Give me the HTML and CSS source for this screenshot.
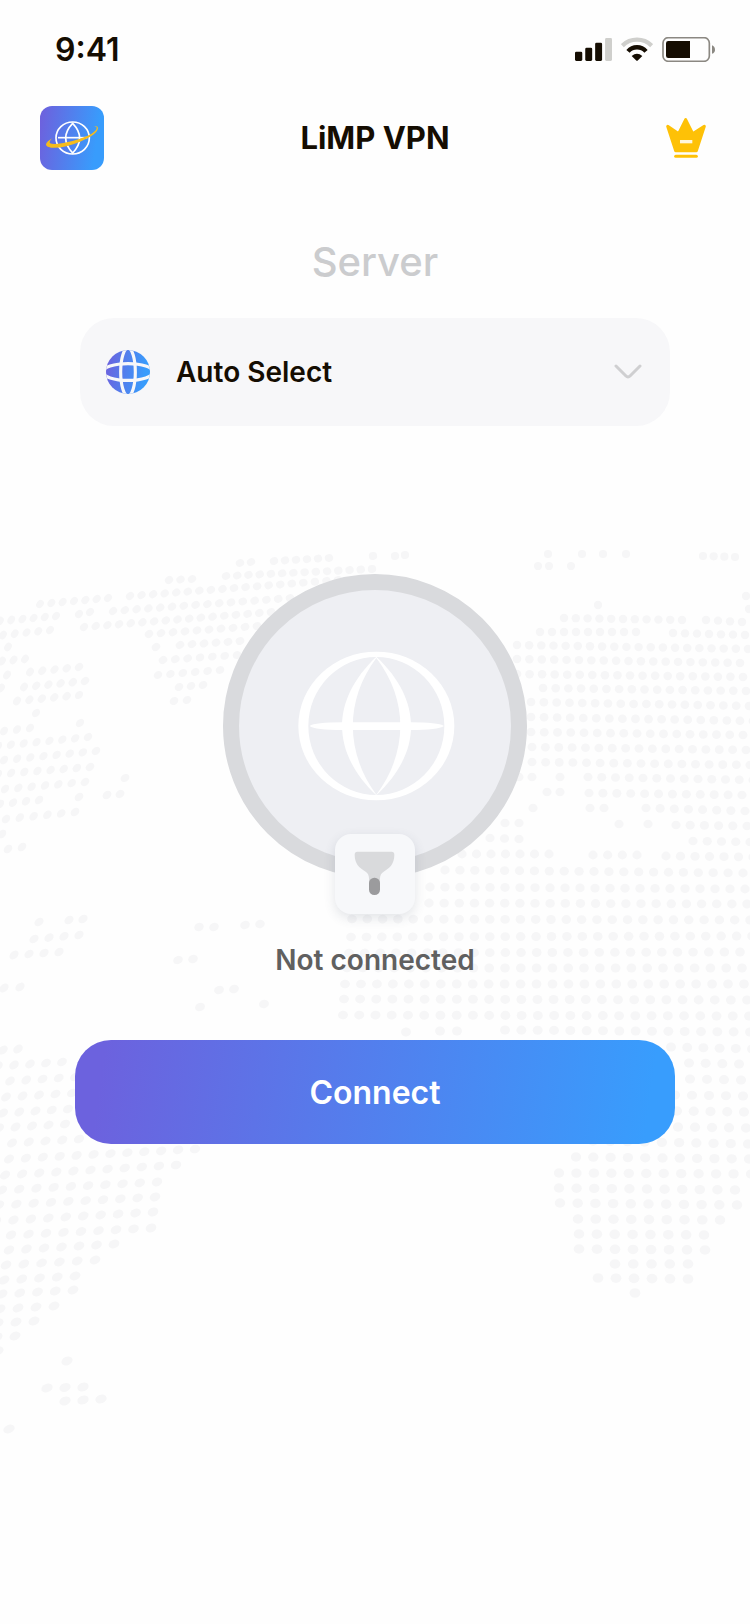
FILE: index.html
```html
<!DOCTYPE html>
<html lang="en">
<head>
	<meta charset="utf-8">
	<meta name="viewport" content="width=device-width, initial-scale=1">
	<title>LiMP VPN</title>
	<link rel="stylesheet" href="styles.css">
</head>
<body>
	<svg class="map" id="map" viewBox="0 0 750 1624" aria-hidden="true"></svg>

	<div class="status-bar">
		<span class="time">9:41</span>
		<div class="status-icons">
			<svg class="signal" viewBox="599 114 112 69" aria-hidden="true">
				<rect x="599" y="155" width="22" height="28" rx="4"/>
				<rect x="630" y="143" width="21" height="40" rx="4"/>
				<rect x="660" y="128" width="21" height="55" rx="4"/>
				<rect class="off" x="690" y="114" width="21" height="69" rx="4"/>
			</svg>
			<svg class="wifi" viewBox="741 112 96 72" aria-hidden="true">
				<path class="off" d="M745 138A63 63 0 0 1 833 138"/>
				<path class="arc" d="M762 155A36 36 0 0 1 816 155"/>
				<path d="M773 169Q789 155 805 169L792 182Q789 185 786 182Z"/>
			</svg>
			<svg class="battery" viewBox="861 111 159 75" aria-hidden="true">
				<rect class="shell" x="864" y="113" width="139" height="71" rx="16"/>
				<path d="M880 123H945V174H880Q873 174 873 167V130Q873 123 880 123Z"/>
				<path class="nub" d="M1011 136Q1020 140 1020 149T1011 161Z"/>
			</svg>
		</div>
	</div>

	<header class="header">
		<svg class="logo" viewBox="120 318 192 192" role="img" aria-label="LiMP VPN">
			<defs>
				<linearGradient id="brand" x1="0" y1="0" x2="1" y2="0.15">
					<stop offset="0.05" stop-color="#6c62de"/>
					<stop offset="0.95" stop-color="#389cfc"/>
				</linearGradient>
			</defs>
			<rect x="120" y="318" width="192" height="192" rx="36" fill="url(#brand)"/>
			<g fill="none" stroke="#fff" stroke-width="5">
				<ellipse cx="218" cy="414" rx="50" ry="48"/>
				<path d="M218 370Q176 414 218 459Q260 414 218 370Z"/>
				<path d="M174 413H262"/>
			</g>
			<path fill="#f6bc1c" d="M278 380Q292 376 294 383Q294 402 240 425Q190 446 153 443Q138 441 138 433Q140 424 158 414Q146 424 150 430Q160 435 190 429Q245 418 275 401Q292 390 290 382Q286 378 278 380Z"/>
		</svg>
		<h1 class="title">LiMP VPN</h1>
		<button class="premium" type="button" aria-label="Premium">
			<svg viewBox="861 342 144 144" aria-hidden="true">
				<path class="crown" d="M878 379L911 401L932 359L953 401L988 379L964 452H902Z"/>
				<path class="crown-line" d="M902 469H964"/>
				<path class="crown-dash" d="M915 425H952"/>
			</svg>
		</button>
	</header>

	<main class="main">
		<label class="server-label" for="server">Server</label>
		<div class="server">
			<svg class="server-icon" viewBox="0 0 42 42" aria-hidden="true">
				<clipPath id="disc"><circle cx="21" cy="21" r="21"/></clipPath>
				<circle cx="21" cy="21" r="21" fill="url(#brand)"/>
				<g class="grid-lines" clip-path="url(#disc)">
					<ellipse cx="21" cy="21" rx="7" ry="23"/>
					<ellipse cx="21" cy="21" rx="24" ry="8"/>
				</g>
			</svg>
			<select class="server-select" id="server">
				<option>Auto Select</option>
			</select>
			<svg class="chevron" viewBox="0 0 28 16" aria-hidden="true">
				<path d="M2 2L12 12Q14 14 16 12L26 2"/>
			</svg>
		</div>

		<div class="dial">
			<svg class="globe" viewBox="284 302 480 456" aria-hidden="true">
				<path fill-rule="evenodd" d="M294 530A234 223 0 0 1 762 530A234 223 0 0 1 294 530ZM324 530A204 207 0 0 0 732 530A204 207 0 0 0 324 530Z"/>
				<path fill-rule="evenodd" d="M528 322C391 452 391 608 528 738C667 608 667 452 528 322ZM528 326C434 452 434 608 528 736C624 608 624 452 528 326Z"/>
				<path d="M328 530Q343 519 428 519H630Q713 519 731 530Q713 542 630 542H428Q343 542 328 530Z"/>
			</svg>
			<div class="badge">
				<svg viewBox="408 852 240 240" aria-hidden="true">
					<path fill="#d9dadc" d="M475 905H578Q586 905 586 914C586 942 572 954 554 965Q543 972 543 985V1005H510V985Q510 972 500 965C482 954 467 942 467 914Q467 905 475 905Z"/>
					<rect fill="#9b9b9d" x="510" y="983" width="33" height="52" rx="16"/>
				</svg>
			</div>
		</div>

		<p class="state">Not connected</p>
		<button class="connect" type="button">Connect</button>
	</main>

	<script src="map.js"></script>
</body>
</html>
```
FILE: styles.css
```css
* {
	box-sizing: border-box;
}
body {
	position: relative;
	min-height: 100vh;
	margin: 0;
	overflow-x: hidden;
	background: #fefefe;
	color: #150d02;
	font-family: Inter, "Liberation Sans", sans-serif;
}
button, select {
	border: 0;
	font-family: inherit;
	cursor: pointer;
}
svg {
	display: block;
}

/* dotted world map behind the page */
.map {
	position: absolute;
	top: 0;
	left: 0;
	z-index: -1;
	width: 100%;
	fill: #f6f6f7;
}

.status-bar {
	display: flex;
	align-items: center;
	justify-content: space-between;
	height: 98px;
	padding: 0 35px 0 55px;
}
.time {
	font-size: 32px;
	font-weight: 600;
}
.status-icons {
	display: flex;
	align-items: center;
	gap: 9px;
	fill: #150d02;
}
.signal {
	width: 37px;
	height: 23px;
}
.signal .off {
	fill: #cfcfcc;
}
.wifi {
	width: 32px;
	height: 24px;
}
.wifi .off, .wifi .arc {
	fill: none;
	stroke: #cfcfcc;
	stroke-width: 13;
}
.wifi .arc {
	stroke: #150d02;
}
.battery {
	width: 53px;
	height: 25px;
}
.battery .shell {
	fill: none;
	stroke: #8b8882;
	stroke-width: 5;
}
.battery .nub {
	fill: #8b8882;
}

.header {
	display: grid;
	grid-template-columns: 1fr auto 1fr;
	align-items: center;
	padding: 8px 40px 0;
}
.logo {
	width: 64px;
	height: 64px;
}
.title {
	margin: 0;
	font-size: 31px;
	line-height: 40px;
	font-weight: 700;
}
.premium {
	justify-self: end;
	width: 48px;
	height: 48px;
	padding: 0;
	background: none;
}
.crown {
	fill: #fec107;
	stroke: #fec107;
	stroke-width: 9;
	stroke-linejoin: round;
}
.crown-line {
	stroke: #fec107;
	stroke-width: 9;
	stroke-linecap: round;
}
.crown-dash {
	stroke: #fff6dc;
	stroke-width: 10;
}

.main {
	display: flex;
	flex-direction: column;
	align-items: center;
	padding: 68px 75px 0;
}
.server-label {
	color: #cbccce;
	font-size: 40px;
	line-height: 48px;
	font-weight: 500;
}
.server {
	display: grid;
	grid-template-columns: 44px 1fr 28px;
	align-items: center;
	width: calc(100% - 10px);
	height: 108px;
	margin-top: 32px;
	padding: 0 28px 0 26px;
	border-radius: 34px;
	background: #f7f7f9;
}
.server-icon {
	grid-area: 1 / 1;
}
.grid-lines {
	fill: none;
	stroke: #f7f7f9;
	stroke-width: 3;
}
.server-select {
	grid-area: 1 / 1 / 2 / 4;
	height: 108px;
	padding: 0 0 0 70px;
	appearance: none;
	background: none;
	color: #150d02;
	font-size: 28px;
	font-weight: 600;
}
.chevron {
	grid-area: 1 / 3;
	fill: none;
	stroke: #cfcfd1;
	stroke-width: 3;
	stroke-linecap: round;
	pointer-events: none;
}

.dial {
	position: relative;
	display: flex;
	align-items: center;
	justify-content: center;
	width: 304px;
	height: 304px;
	margin-top: 148px;
	border: 16px solid #d9dadd;
	border-radius: 50%;
	background: #eeeff3;
}
.globe {
	width: 160px;
	height: 152px;
	fill: #fff;
}
.badge {
	position: absolute;
	bottom: -52px;
	left: calc(50% - 40px);
	width: 80px;
	height: 80px;
	border-radius: 16px;
	background: #f7f8fa;
	box-shadow: 0 4px 12px rgba(60, 70, 90, 0.14);
}

.state {
	margin: 64px 0 0;
	color: #606060;
	font-size: 28px;
	line-height: 36px;
	font-weight: 600;
}
.connect {
	width: 100%;
	height: 104px;
	margin-top: 62px;
	border-radius: 36px;
	background: linear-gradient(98deg, #6c62de 5%, #389dfd 95%);
	color: #fff;
	font-size: 32px;
	font-weight: 600;
}
```
FILE: map.js
```js
// each run of dots: x and y of the first dot, x and y of the last, number of dots
const runs = [
	// north-west
	[240,563,251,562,2], [274,561,329,558,6], [373,556,373,556,1], [395,556,405,555,2],
	[169,580,192,579,3], [226,576,372,569,14],
	[40,604,108,598,7], [130,596,338,580,19],
	[0,621,56,616,6], [79,614,90,612,2], [113,611,290,598,16],
	[3,635,50,630,5], [84,627,271,612,17],
	[8,647,8,647,1], [149,634,257,626,10],
	[2,661,25,659,3], [156,647,156,647,1], [180,645,240,641,6],
	[7,675,7,675,1], [30,672,79,667,5], [163,660,237,655,7],
	[1,688,1,688,1], [24,687,85,681,6], [158,675,220,670,6],
	[17,701,79,695,6], [179,687,203,685,3],
	[36,713,36,713,1], [174,701,187,700,2],
	[4,731,30,728,3], [80,723,80,723,1],
	[-2,746,88,737,8],
	[4,760,96,751,8],
	[-2,774,90,767,8],
	[5,789,85,782,7], [125,778,125,778,1],
	[0,804,39,800,4], [79,797,79,797,1], [107,795,120,794,2],
	[6,819,75,812,6],
	[2,834,2,834,1],
	[8,849,22,847,2],
	[39,922,39,922,1], [69,920,83,919,2],
	[34,939,79,935,4],
	[14,955,59,952,4],
	[4,988,20,987,2],
	[199,927,214,927,2], [245,925,260,924,2],
	[178,960,193,959,2],
	[219,990,234,989,2],
	[200,1007,200,1007,1], [264,1004,264,1004,1],

	// south-west
	[3,1050,18,1049,2],
	[-2,1066,62,1062,5],
	[10,1081,75,1077,5],
	[6,1097,72,1093,5],
	[3,1113,68,1109,5],
	[-1,1128,65,1124,5],
	[12,1143,79,1139,5],
	[9,1159,195,1149,12],
	[5,1175,176,1165,11],
	[2,1190,157,1182,10],
	[-1,1205,155,1197,10],
	[-4,1221,153,1212,10],
	[11,1235,151,1228,9],
	[9,1250,114,1244,7],
	[6,1265,95,1260,6],
	[4,1280,75,1276,5],
	[2,1294,73,1290,5],
	[0,1309,54,1306,4],
	[-2,1323,34,1321,3],
	[-3,1337,15,1336,2],
	[-2,1351,-2,1351,1],
	[67,1361,67,1361,1],
	[47,1388,83,1387,3],
	[65,1401,101,1399,3],
	[9,1429,9,1429,1],

	// north-east
	[548,554,548,554,1], [582,554,582,554,1], [603,554,603,554,1], [626,554,626,554,1], [703,556,735,557,4],
	[538,566,549,566,2], [571,566,571,566,1],
	[746,596,746,596,1], [598,605,598,605,1], [749,609,749,609,1],
	[564,618,682,620,11], [706,620,742,622,4],
	[540,632,636,632,9], [673,633,745,635,7],
	[517,645,748,649,20],
	[517,659,740,663,19],
	[517,674,743,677,19],
	[543,688,746,691,17],
	[531,702,749,706,18],
	[531,717,753,721,18],
	[531,732,743,735,17],
	[532,747,746,750,17],
	[532,762,750,765,17],
	[519,777,532,777,2], [560,777,560,777,1], [588,777,753,780,13],
	[547,792,560,792,2], [589,793,742,795,12],
	[533,808,533,808,1], [590,808,604,808,2], [646,808,745,811,8],
	[505,823,519,823,2], [619,824,619,824,1], [648,824,648,824,1], [676,825,747,826,6],
	[490,838,519,839,3], [693,841,750,842,5],
	[462,854,549,854,7], [593,855,637,855,4], [666,856,753,857,7],
	[445,870,743,873,21],
	[430,887,745,889,22],
	[429,903,747,904,22],
	[352,919,750,920,27],
	[351,937,752,936,27],
	[349,953,740,952,26],
	[347,968,742,968,26],
	[345,984,744,984,26],
	[344,999,747,1000,26],
	[343,1015,749,1016,26],
	[406,1032,406,1032,1], [440,1031,457,1031,2], [505,1030,750,1032,16],

	// south-east
	[671,1047,752,1049,6],
	[689,1063,739,1064,4],
	[690,1079,741,1080,4],
	[675,1095,743,1096,5],
	[677,1111,744,1112,5],
	[678,1127,746,1128,5],
	[593,1141,748,1144,10],
	[576,1157,749,1159,11],
	[559,1173,751,1174,12],
	[559,1188,735,1190,11],
	[560,1203,737,1205,11],
	[578,1219,720,1220,9],
	[579,1234,704,1235,8],
	[579,1249,705,1250,8],
	[615,1264,688,1264,5],
	[598,1278,688,1279,6],
	[635,1293,635,1293,1]
];

const map = document.getElementById('map');

function dot(x, y) {
	const el = document.createElementNS('http://www.w3.org/2000/svg', 'ellipse');
	// dots grow towards the south, the western ones are narrower and lean to the right
	const south = (y - 550) / 850;
	const west = Math.max(0, (450 - x) / 450);
	el.setAttribute('rx', 4.1 + south * 1.5 + west * 0.3);
	el.setAttribute('ry', 4.1 + south * 0.8 - west * 0.8);
	el.setAttribute('transform', `translate(${x} ${y}) rotate(${-60 * west * (1 - south * 0.6)})`);
	map.appendChild(el);
}

for (const [x1, y1, x2, y2, n] of runs) {
	for (let i = 0; i < n; i++) {
		const t = n > 1 ? i / (n - 1) : 0;
		dot(x1 + (x2 - x1) * t, y1 + (y2 - y1) * t);
	}
}
```
